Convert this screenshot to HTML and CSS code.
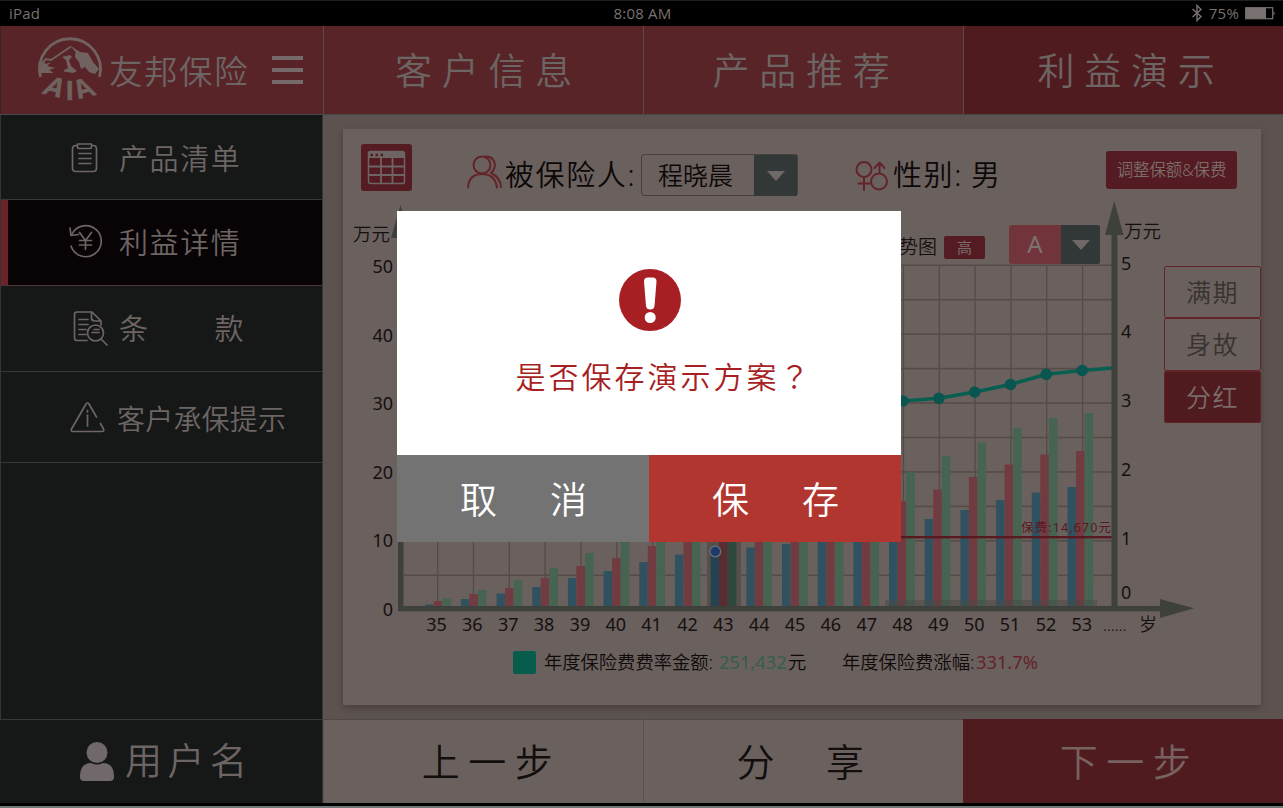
FILE: index.html
```html
<!DOCTYPE html>
<html lang="zh-CN">
<head>
<meta charset="utf-8">
<title>友邦保险</title>
<link rel="stylesheet" href="styles.css">
</head>
<body>
<div class="app">
  <div class="status">
    <span class="status-device">iPad</span>
    <span class="status-time">8:08 AM</span>
    <span class="status-right">
      <svg width="12" height="18" viewBox="0 0 12 18"><path d="M1.5 5 L10 12.5 L6 16.5 V1.5 L10 5.5 L1.5 13" fill="none" stroke="#78716f" stroke-width="1.4"/></svg>
      <span>75%</span>
      <svg width="31" height="13" viewBox="0 0 31 13"><rect x=".7" y=".7" width="27" height="11" fill="none" stroke="#78716f" stroke-width="1.2"/><rect x="1" y="1" width="20" height="10.5" fill="#78716f"/><path d="M28.5 4 Q31 6.3 28.5 8.6 Z" fill="#78716f"/></svg>
    </span>
  </div>

  <header class="header">
    <div class="brand">
      <svg class="logo" width="68" height="72" viewBox="0 0 68 72">
        <path d="M4.500 47 A30.500 30.500 0 1 1 63.500 47" fill="none" stroke="#70625f" stroke-width="2.800"/>
        <path d="M3 36 L10 29 L15 30 L35 16.500" fill="none" stroke="#70625f" stroke-width="1.800"/>
        <path d="M34 15.500 L44 22 L52 23 L57 32 L63 39 L59 44 L53 42 L49 37 L45 39 L43 32 L39 27 L39.500 22 Z" fill="#70625f"/>
        <path d="M3 38 L8 32 L10 34 L15 32 L11 36 L19 38 L13 40 L18 43 L5 43 Z M26 27 L34 25 L36 27 L33 30 L35 36 L41 41 L37 43 L28 41.500 L28 40 L32 38 L30 30 Z" fill="#70625f"/>
        <g class="logo-text"><text transform="translate(5 63) rotate(14) skewX(-14)">A</text><text x="30" y="70">I</text><text transform="translate(42.500 69) rotate(-14) skewX(14)">A</text></g>
      </svg>
      <span class="brand-name">友邦保险</span>
      <span class="burger"><i></i><i></i><i></i></span>
    </div>
    <div class="tab">客户信息</div>
    <div class="tab tab-mid">产品推荐</div>
    <div class="tab tab-on">利益演示</div>
  </header>

  <div class="body">
    <aside class="side">
      <div class="nav nav-list">
        <svg width="38" height="38" viewBox="1 -1 38 38"><g class="ico"><path d="M11 6.500 H10 Q6.500 6.500 6.500 10 V29 Q6.500 32.500 10 32.500 H27 Q30.500 32.500 30.500 29 V10 Q30.500 6.500 27 6.500 H26"/><path d="M11.500 5 H25.500 V8 Q25.500 9.500 24 9.500 H13 Q11.500 9.500 11.500 8 Z M13 14.500 H25 M13 19.500 H25 M13 24.500 H25"/></g></svg>
        <span>产品清单</span>
      </div>
      <div class="nav nav-on">
        <svg width="38" height="38" viewBox="1 0 38 38"><g class="ico"><path d="M6 12 A15.500 15.500 0 1 1 5 24"/><path d="M4 6 L5 13.500 L12.500 12.500"/><path d="M13.500 10.500 L19.500 18.500 L25.500 10.500 M19.500 18.500 V27.500 M13.500 18.500 H25.500 M13.500 23 H25.500"/></g></svg>
        <span>利益详情</span>
      </div>
      <div class="nav nav-terms">
        <svg width="38" height="38" viewBox="0 0 38 38"><g class="ico"><path d="M20 32.500 H10 Q7.500 32.500 7.500 30 V6.500 Q7.500 4 10 4 H25 L34 13 V17 M24.500 4 V10 Q24.500 13 28 13 H34 M12 11.500 H21 M12 16.500 H21 M12 21.500 H19 M12 26.500 H19"/><circle cx="28.500" cy="25" r="8"/><path d="M25 24.500 H32 M27 21.500 H32 M34 31 L40 37"/></g></svg>
        <span class="spread"><b>条</b><b>款</b></span>
      </div>
      <div class="nav nav-tip">
        <svg width="38" height="38" viewBox="0 0 38 38"><g class="ico"><path d="M29.500 18 L22 5 Q20.500 2.500 19 5 L4.500 30 Q3.500 32.500 6 32.500 H35 Q37.500 32.500 36.500 30 L33.500 24.500 M20.500 16 V27 M20.500 11.500 V13"/></g></svg>
        <span>客户承保提示</span>
      </div>
      <div class="nav-gap"></div>
    </aside>

    <main class="main">
      <section class="card">
        <div class="filters">
          <span class="cal"><svg width="51" height="48" viewBox="0 0 51 48"><rect x="7.500" y="7.500" width="36" height="32" rx="2" fill="none" stroke="#6d6563" stroke-width="1.500"/><rect x="8" y="8" width="35" height="6" fill="#6d6563"/><path d="M9.500 11 H22" stroke="#551b22" stroke-width="2.500" stroke-dasharray="2.500 2.500"/><path d="M8 22.500 H43 M8 31 H43 M20 14 V39 M31.500 14 V39" stroke="#6d6563" stroke-width="1.800"/></svg></span>
          <svg class="people" width="36" height="34" viewBox="0 0 36 34"><g class="ico-red"><circle cx="16" cy="10" r="8.500"/><path d="M2 32.500 Q3 19 16 19 Q29 19 31 32.500"/><path d="M19 1.500 Q28 1 29 10 Q28.500 15 25 18 Q34 22 35 32"/></g></svg>
          <span class="label label-who">被保险人:</span>
          <span class="select"><span>程晓晨</span><em><i></i></em></span>
          <svg class="sex" width="34" height="30" viewBox="0 0 34 30"><g class="ico-red"><circle cx="9" cy="8.500" r="7.500"/><path d="M9 16 V29 M3.500 22.500 H14.500"/><circle cx="24" cy="20.500" r="8"/><path d="M24.500 12 V2 M19.500 7 L24.500 1.500 L29.500 7"/></g></svg>
          <span class="label label-sex">性别:</span>
          <span class="label label-male">男</span>
          <span class="adjust">调整保额&amp;保费</span>
        </div>
        <div class="plot">
          <svg id="chart" class="chart" width="821" height="440" viewBox="343 200 821 440"></svg>
          <div class="modes"><span>满期</span><span>身故</span><span class="mode-on">分红</span></div>
          <span class="level">高</span>
          <span class="plan"><b>A</b><em><i></i></em></span>
        </div>
        <div class="legend">
          <i></i><span class="rate">年度保险费费率金额:</span><span class="amount">251,432</span><span class="yuan">元</span><span class="growth">年度保险费涨幅:</span><span class="pct">331.7%</span>
        </div>
      </section>
    </main>
  </div>

  <footer class="footer">
    <div class="user">
      <svg width="34" height="40" viewBox="0 0 34 40"><ellipse cx="17" cy="10.500" rx="10.500" ry="10.500" fill="#70686a"/><path d="M0 35 Q0 21 11 21 Q17 24 23 21 Q34 21 34 35 Q34 39 30 39 H4 Q0 39 0 35 Z" fill="#70686a"/></svg>
      <span>用户名</span>
    </div>
    <div class="step">上一步</div>
    <div class="step share"><span>分</span><span>享</span></div>
    <div class="step next">下一步</div>
  </footer>
  <div class="edge"></div>

  <div class="dialog">
    <div class="dialog-body">
      <svg width="64" height="64" viewBox="0 0 64 64"><circle cx="32" cy="32" r="31" fill="#a71e23"/><path d="M26 13.500 Q26 9.500 30 9.500 H34.500 Q38.500 9.500 38.500 13.500 L36.500 38 Q36 41.500 32.200 41.500 Q28.500 41.500 28 38 Z" fill="#fff"/><circle cx="32.200" cy="49.500" r="5.500" fill="#fff"/></svg>
      <p>是否保存演示方案<span lang="zh-TW" class="mark">？</span></p>
    </div>
    <div class="dialog-actions">
      <span class="cancel"><b>取</b><b>消</b></span>
      <span class="save"><b>保</b><b>存</b></span>
    </div>
  </div>
</div>
<script src="chart.js"></script>
</body>
</html>
```
FILE: styles.css
```css
* { box-sizing: border-box; }
body {
  margin: 0;
  background: #000;
  font-family: "Noto Sans", "Noto Sans CJK SC", sans-serif;
  font-weight: 350;
  color: #6d6563;
}
b, em, i { font-weight: inherit; font-style: normal; }
svg { display: block; overflow: visible; flex: none; }
.app {
  position: relative;
  width: 1283px;
  height: 808px;
  overflow: hidden;
  display: flex;
  flex-direction: column;
  white-space: nowrap;
}

.status {
  height: 26px;
  border-top: 1px solid #1c1f1f;
  display: grid;
  grid-template-columns: 1fr auto 1fr;
  align-items: center;
  padding: 0 7px 1px 9px;
  font-family: "Open Sans", "Noto Sans", sans-serif;
  font-size: 15px;
  font-weight: 400;
  letter-spacing: .2px;
  color: #78716f;
}
.status-right { display: flex; justify-content: flex-end; align-items: center; gap: 6px; }

.header {
  height: 89px;
  display: grid;
  grid-template-columns: 323px 320px 320px 320px;
  background: #582428;
  border-bottom: 1px solid #47484a;
}
.brand { display: flex; align-items: center; padding-left: 35px; border-left: 1px solid #3a2426; }
.logo { margin-top: -8px; }
.logo-text { font: bold 27px "Liberation Sans", Arial, sans-serif; fill: #70625f; stroke: #70625f; stroke-width: .6px; }
.brand-name { font-size: 33.500px; letter-spacing: 1.500px; padding: 0 0 1px 5px; width: 168px; }
.burger { display: grid; gap: 8px; width: 31px; margin-top: -1px; }
.burger i { height: 4px; background: #75696a; }
.tab {
  display: flex;
  align-items: center;
  justify-content: center;
  border-left: 1px solid #66474a;
  font-size: 37px;
  letter-spacing: 9.800px;
  padding: 0 0 3px 10px;
}
.tab-mid { padding-left: 5px; }
.tab-on { background: #501b1f; padding-left: 15px; }

.body { height: 604px; display: grid; grid-template-columns: 323px 960px; }
.side { background: #151817; border-left: 1px solid #303635; border-right: 1px solid #343635; display: flex; flex-direction: column; }
.nav {
  height: 86px;
  border-bottom: 1px solid #343938;
  display: flex;
  align-items: center;
  gap: 14px;
  padding: 0 0 0 66px;
  font-size: 29px;
  letter-spacing: 1.600px;
}
.nav-list { height: 85px; }
.nav-on { height: 86px; background: #080305; border-left: 7px solid #6a2329; padding-left: 59px; padding-bottom: 3px; border-bottom-color: #4c3538; }
.nav-terms { padding-bottom: 3px; }
.nav-tip { height: 91px; gap: 12px; font-size: 28px; letter-spacing: .2px; padding-top: 1px; }
.spread { display: flex; gap: 65px; }
.nav-gap { flex: 1; }
.ico { fill: none; stroke: #6d6563; stroke-width: 1.700; stroke-linecap: round; stroke-linejoin: round; }
.ico-red { fill: none; stroke: #632329; stroke-width: 2; stroke-linecap: round; stroke-linejoin: round; }

.main { background: #5c5350; padding: 14px 22px 14px 20px; }
.card { height: 576px; background: #6a605d; box-shadow: 0 3px 6px rgba(30, 20, 20, .3); display: flex; flex-direction: column; }
.filters { height: 71px; display: flex; align-items: flex-start; padding: 15px 24px 0 18px; color: #0b0808; }
.cal { background: #551b22; border-radius: 3px; height: 47px; }
.people { margin: 11px 0 0 54px; }
.label { font-size: 29px; line-height: 38px; letter-spacing: 1.600px; padding-top: 12px; }
.label-who { width: 139px; padding-left: 3px; }
.select { width: 157px; height: 42px; margin-top: 10px; border: 1px solid #463f3e; border-radius: 3px; display: grid; grid-template-columns: 1fr 43px; font-size: 25px; line-height: 41px; }
.select span { padding-left: 16px; }
.select em, .plan em { display: flex; align-items: center; justify-content: center; background: #323837; }
.select em i, .plan em i { border: 9px solid transparent; border-top: 10px solid #6f6866; border-bottom: 0; }
.sex { margin: 17px 0 0 57px; }
.label-sex { width: 82px; padding-left: 4px; }
.adjust { margin: 7px 0 0 auto; width: 131px; height: 38px; border-radius: 3px; background: #551b22; color: #7b6d6a; text-align: center; font-size: 16.500px; line-height: 37px; letter-spacing: -.2px; }

.plot { position: relative; height: 440px; display: flex; justify-content: space-between; }
.chart text { fill: #151010; }
.chart .num { font-weight: 400; }
.chart .premium { fill: #581a20; font-size: 12.500px; font-weight: 400; }
.modes { width: 97px; padding-top: 66px; }
.modes span { display: block; height: 52.400px; border: 1px solid #632329; border-radius: 2px; text-align: center; font-size: 25px; line-height: 51px; letter-spacing: 1.500px; color: #383231; }
.modes .mode-on { background: #501b1f; color: #7a6c69; }
.level { position: absolute; left: 601px; top: 36px; width: 41px; height: 23px; border-radius: 2px; background: #551b22; color: #7a6c69; font-size: 15px; font-weight: 400; line-height: 22px; text-align: center; }
.plan { position: absolute; left: 666px; top: 25px; width: 91px; height: 39px; display: grid; grid-template-columns: 52px 39px; border-radius: 3px; overflow: hidden; background: #71343a; color: #7d7270; font-size: 24px; font-weight: 400; line-height: 38px; text-align: center; }

.legend { display: flex; align-items: center; height: 44px; padding-left: 170px; font-size: 18.300px; color: #0e0a0a; }
.legend i { width: 23px; height: 23px; border-radius: 2px; background: #075c4c; }
.legend span { padding-bottom: 2px; }
.rate { width: 174px; margin-left: 8px; }
.legend .amount { width: 69px; margin-left: 1px; color: #355f4b; font-weight: 400; }
.yuan { width: 54px; }
.growth { width: 134px; }
.legend .pct { color: #632329; font-weight: 400; }

.footer { height: 84px; display: grid; grid-template-columns: 323px 320px 320px 320px; font-size: 38px; }
.user { background: #151817; border-top: 1px solid #343938; border-right: 1px solid #343635; display: flex; align-items: center; gap: 11px; padding: 0 0 0 80px; font-size: 37px; letter-spacing: 5.500px; }
.user span { padding-bottom: 5px; }
.step { background: #6a605d; color: #120e0d; border-left: 1px solid #5a5250; border-top: 1px solid #504947; display: flex; align-items: center; justify-content: center; letter-spacing: 8.500px; padding: 0 0 5px 16px; }
.share { gap: 43px; padding-left: 2px; }
.next { background: #501b1f; color: #76635f; padding-left: 12px; border-color: #501b1f; }
.edge { height: 5px; border-bottom: 2px solid #6f7a78; background: #000; }

.dialog { position: absolute; left: 397px; top: 211px; width: 504px; height: 331px; display: flex; flex-direction: column; background: #fff; }
.dialog-body { height: 244px; display: flex; flex-direction: column; align-items: center; padding: 57px 0 0 2px; color: #a71e23; }
.dialog-body p { margin: 21px 0 0 28px; font-size: 30px; line-height: 44px; letter-spacing: 3px; }
.mark { font-family: "Noto Sans CJK TC", sans-serif; }
.dialog-actions { height: 87px; display: grid; grid-template-columns: 252px 252px; color: #fff; font-size: 37px; }
.dialog-actions span { display: flex; align-items: center; justify-content: center; gap: 53px; padding: 0 0 1px 1px; }
.cancel { background: #737373; }
.save { background: #b1362f; }
```
FILE: chart.js
```js
// Draws the benefit chart: grid, bars per age, bonus line, axes and labels.
const svg = document.getElementById('chart');
const NS = 'http://www.w3.org/2000/svg';
function add(tag, attrs, text) {
  const el = document.createElementNS(NS, tag);
  for (const k in attrs) el.setAttribute(k, attrs[k]);
  if (text !== undefined) el.textContent = text;
  svg.appendChild(el);
  return el;
}
const rect = (x, y, width, height, fill) => add('rect', { x, y, width, height, fill });
const label = (x, y, text, anchor, size) =>
  add('text', { x, y, 'text-anchor': anchor || 'start', 'font-size': size || 18, class: /\d/.test(text) ? 'num' : 'word' }, text);

for (let i = 0; i < 10; i++) rect(404, 264.5 + i * 34.45, 708, 1.5, '#544b49');
for (let i = 0; i < 19; i++) rect(437 + i * 35.83, 265, 1.3, 341, '#544b49');

const blue = [604.5, 599, 593.5, 587, 578, 571, 562, 554.5, 551, 547.5, 544, 540, 535, 528, 519, 510, 500, 492.5, 487];
const red = [601, 594, 588, 578, 566, 558, 546, 540, 536, 531, 525, 519, 510, 501, 489.5, 477, 464.5, 454.5, 451];
const green = [598, 590, 580, 568, 553, 541, 535, 528, 520, 510, 500, 490, 481, 472, 456, 442.5, 428, 418, 413];
rect(707, 540, 34, 67, '#56504c');
for (let i = 0; i < 19; i++) {
  const x = 433.7 + i * 35.68;
  const hot = i === 8;
  rect(x - 8.5, blue[i], 8.5, 607 - blue[i], hot ? '#26414f' : '#305260');
  rect(x, red[i], 8.6, 607 - red[i], hot ? '#582c33' : '#713c41');
  rect(x + 8.6, green[i], 8.6, 607 - green[i], hot ? '#2f493f' : '#466451');
}
add('rect', { x: 885, y: 600, width: 212, height: 6, fill: '#464a46', opacity: 0.45 });

rect(397, 536, 716, 2.4, '#581a20');
add('text', { x: 1021, y: 532, class: 'premium', textLength: 90 }, '保费:14,670元');

const pts = [[903, 401], [938.9, 398.3], [974.7, 392], [1010.5, 384.5], [1046.3, 374.3], [1082.2, 370.5]];
add('polyline', { points: pts.concat([[1112, 368]]).join(' '), fill: 'none', stroke: '#075f50', 'stroke-width': 3.6 });
pts.forEach(([cx, cy]) => add('circle', { cx, cy, r: 5.8, fill: '#0b5550' }));
add('circle', { cx: 715.3, cy: 551.5, r: 5.4, fill: '#203966', stroke: '#66727c', 'stroke-width': 1.3 });

const axis = '#3e403c';
rect(398, 238, 5.5, 373, axis);
rect(1111.5, 234, 6, 374, axis);
rect(398, 606, 764, 5.3, axis);
add('path', { d: 'M400.500 205 L410 238 H391 Z M1114.300 201 L1123.500 235 H1105 Z M1194 608.300 L1160 599 V618 Z', fill: axis });

label(353, 241, '万元', 'start', 18.5);
label(1124, 238, '万元', 'start', 18.5);
label(937, 254, '趋势图', 'end', 19);
['50', '40', '30', '20', '10', '0'].forEach((t, i) => label(393, 273 + i * 68.6, t, 'end'));
[[5, 270], [4, 338], [3, 407], [2, 476], [1, 545], [0, 599]].forEach(([t, y]) => label(1121, y, t));
for (let i = 0; i < 19; i++) label(436.5 + i * 35.85, 631, 35 + i, 'middle');
label(1103, 631, '......', 'start', 16);
label(1139, 631, '岁');
```
